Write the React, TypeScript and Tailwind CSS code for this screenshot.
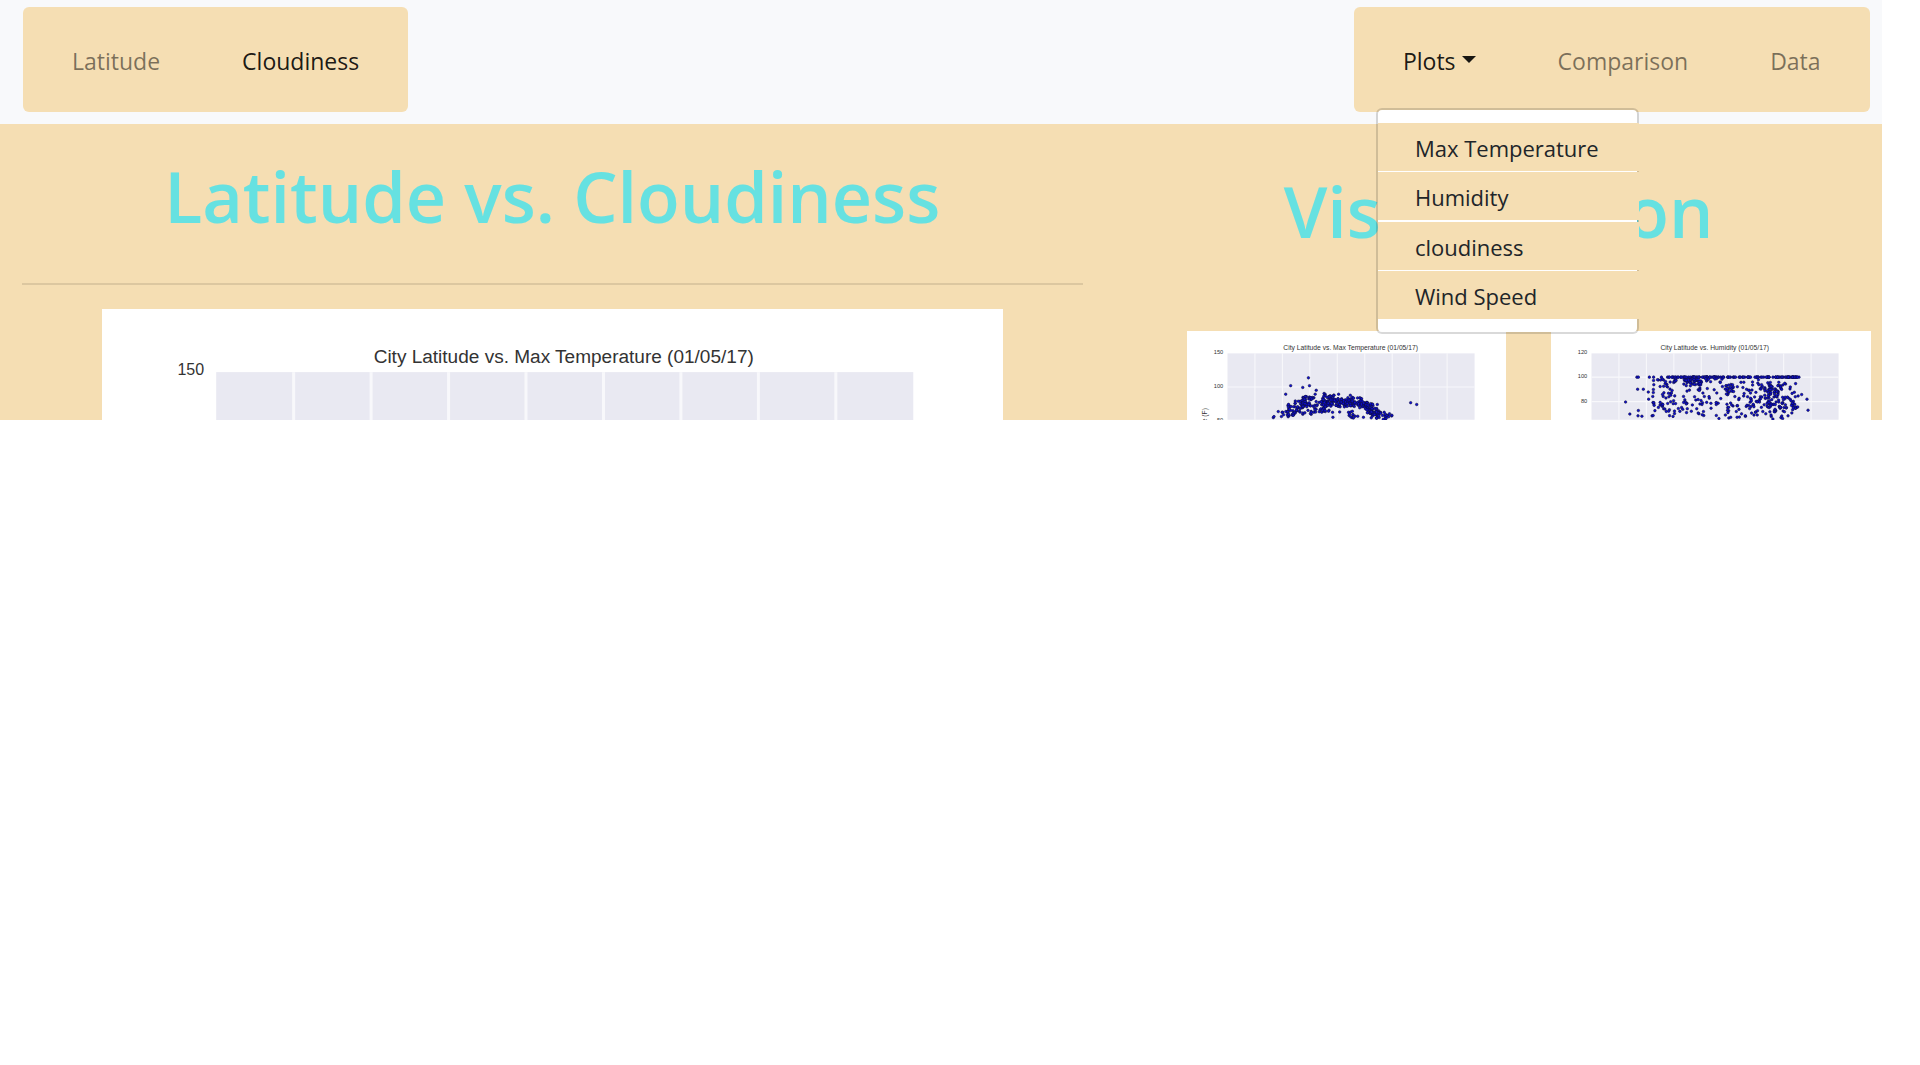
import type { ReactNode } from "react";

type Point = [number, number];
type Cluster = { x: [number, number]; y: [number, number]; n: number };

const SIDE = 114;
const RIGHT = 810;
const TOP = 63;

function seeded(seed: number) {
  let s = seed;
  return () => {
    s = (s * 16807) % 2147483647;
    return s / 2147483647;
  };
}

function scatter(clusters: Cluster[], seed: number): Point[] {
  const rnd = seeded(seed);
  return clusters.flatMap((c) =>
    Array.from({ length: c.n }, (): Point => [
      c.x[0] + rnd() * (c.x[1] - c.x[0]),
      c.y[0] + rnd() * (c.y[1] - c.y[0]),
    ]),
  );
}

const temperaturePoints: Point[] = [
  [342, 132], [292, 154], [326, 159], [345, 154], [364, 167], [278, 178],
  [257, 227], [243, 244], [245, 241], [266, 241], [411, 243], [630, 202],
  [647, 207], [361, 178], [386, 176], [389, 178], [427, 178], [460, 181],
  [402, 183], [536, 207], [410, 229], [430, 228], [455, 229], [465, 244],
  [481, 240], [497, 243],
  ...scatter(
    [
      { x: [268, 288], y: [220, 242], n: 10 },
      { x: [282, 306], y: [204, 238], n: 24 },
      { x: [304, 328], y: [196, 236], n: 24 },
      { x: [324, 350], y: [184, 212], n: 38 },
      { x: [326, 350], y: [210, 236], n: 8 },
      { x: [348, 386], y: [186, 230], n: 30 },
      { x: [378, 414], y: [180, 212], n: 42 },
      { x: [380, 400], y: [212, 230], n: 10 },
      { x: [404, 450], y: [190, 214], n: 52 },
      { x: [446, 492], y: [186, 214], n: 50 },
      { x: [486, 510], y: [196, 220], n: 26 },
      { x: [504, 526], y: [204, 232], n: 28 },
      { x: [518, 540], y: [216, 246], n: 28 },
      { x: [532, 562], y: [228, 250], n: 20 },
      { x: [452, 476], y: [226, 246], n: 9 },
      { x: [556, 578], y: [232, 250], n: 7 },
    ],
    41,
  ),
];

const humidityPoints: Point[] = [
  [242, 130], [246, 130], [277, 130], [311, 130], [244, 164], [260, 164],
  [210, 200], [222, 234], [246, 224], [245, 239], [256, 240], [274, 172],
  [275, 192], [706, 179], [721, 192], [724, 223], [696, 183], [289, 130],
  ...scatter(
    [
      { x: [328, 702], y: [130, 130], n: 150 },
      { x: [284, 318], y: [134, 248], n: 30 },
      { x: [318, 350], y: [134, 248], n: 30 },
      { x: [344, 450], y: [134, 144], n: 24 },
      { x: [374, 424], y: [136, 156], n: 34 },
      { x: [370, 430], y: [160, 206], n: 17 },
      { x: [430, 510], y: [134, 206], n: 24 },
      { x: [350, 500], y: [200, 248], n: 26 },
      { x: [490, 590], y: [134, 180], n: 30 },
      { x: [490, 590], y: [180, 248], n: 50 },
      { x: [580, 690], y: [140, 248], n: 64 },
      { x: [600, 655], y: [152, 166], n: 18 },
      { x: [602, 640], y: [168, 190], n: 28 },
      { x: [606, 646], y: [196, 228], n: 24 },
      { x: [640, 696], y: [202, 218], n: 16 },
    ],
    97,
  ),
];

type ChartProps = {
  title: string;
  height: number;
  ticks: { label: string; y: number }[];
  points?: Point[];
  children?: ReactNode;
};

function Chart({ title, height, ticks, points = [], children }: ChartProps) {
  const step = (RIGHT - SIDE) / 9;
  return (
    <svg
      viewBox={`0 0 900 ${height}`}
      role="img"
      aria-label={title}
      className="block w-full bg-white font-['Liberation_Sans',Arial,sans-serif]"
    >
      <rect x={SIDE} y={TOP} width={RIGHT - SIDE} height={height - TOP} fill="#e9e9f2" />
      {Array.from({ length: 8 }, (_, i) => (
        <line
          key={i}
          x1={SIDE + step * (i + 1)}
          x2={SIDE + step * (i + 1)}
          y1={TOP}
          y2={height}
          stroke="#f8f8fb"
          strokeWidth="3"
        />
      ))}
      {ticks.map((t) => (
        <g key={t.label}>
          {t.y > TOP && (
            <line x1={SIDE} x2={RIGHT} y1={t.y} y2={t.y} stroke="#f8f8fb" strokeWidth="3" />
          )}
          <text x="102" y={t.y + 3} textAnchor="end" fontSize="16" fill="#333333">
            {t.label}
          </text>
        </g>
      ))}
      {points.map(([x, y], i) => (
        <circle key={i} cx={x} cy={y} r="3.6" fill="#0c0cd8" stroke="#10102c" strokeWidth="1.5" />
      ))}
      <text x="461" y="54" textAnchor="middle" fontSize="19" fill="#333333">
        {title}
      </text>
      {children}
    </svg>
  );
}

const plots = ["Max Temperature", "Humidity", "cloudiness", "Wind Speed"];

export default function App() {
  return (
    <div className="min-h-screen bg-white font-['Open_Sans','Segoe_UI',sans-serif]">
      <div className="w-[98%]">
        <nav className="flex items-start justify-between bg-[#f8f9fb] pt-[7px] pr-3 pb-3 pl-[23px] text-[23px] leading-9">
          <ul className="flex gap-[82px] rounded-md bg-[#f5deb3] px-[49px] pt-9 pb-[33px]">
            <li>
              <a href="#latitude" className="text-black/50">Latitude</a>
            </li>
            <li>
              <a href="#cloudiness" className="text-black/90">Cloudiness</a>
            </li>
          </ul>
          <ul className="flex gap-[82px] rounded-md bg-[#f5deb3] px-[49px] pt-9 pb-[33px]">
            <li className="relative">
              <button type="button" aria-expanded="true" className="flex items-center gap-1.5 text-black/90">
                Plots
                <span className="mb-1 border-x-[7px] border-t-[7px] border-x-transparent border-t-current" />
              </button>
              <div className="absolute top-[65px] -left-[27px] z-10 flex w-[263px] flex-col gap-px rounded-md border-2 border-black/15 bg-white bg-clip-padding py-[13px] text-[22px]">
                {plots.map((p) => (
                  <a
                    key={p}
                    href="#plot"
                    className="-mr-0.5 bg-[#f5deb3] pt-0.5 pl-[37px] leading-[46px] whitespace-nowrap text-[#212529] nth-3:mt-px"
                  >
                    {p}
                  </a>
                ))}
              </div>
            </li>
            <li>
              <a href="#comparison" className="text-black/50">Comparison</a>
            </li>
            <li>
              <a href="#data" className="text-black/50">Data</a>
            </li>
          </ul>
        </nav>
        <main className="flex bg-[#f5deb3] text-center">
          <section className="flex-[1106] basis-0 px-[22px] pt-[27px]">
            <h1 className="text-[70px] leading-[90px] font-semibold text-[#66e1e1]">
              Latitude vs. Cloudiness
            </h1>
            <hr className="mt-[42px] mb-6 border-0 border-t-2 border-black/10" />
            <div className="mx-auto w-[85%]">
              <Chart
                title="City Latitude vs. Max Temperature (01/05/17)"
                height={111}
                ticks={[{ label: "150", y: TOP }]}
              />
            </div>
          </section>
          <section className="flex-[776] basis-0 pt-[42px] pr-[11px] pl-[22px]">
            <h1 className="text-[70px] leading-[90px] font-semibold text-[#66e1e1]">
              Visualization
            </h1>
            <div className="mt-[75px] ml-[60px] grid grid-cols-2 gap-[45px]">
              <Chart
                title="City Latitude vs. Max Temperature (01/05/17)"
                height={250}
                points={temperaturePoints}
                ticks={[
                  { label: "150", y: TOP },
                  { label: "100", y: 158 },
                  { label: "50", y: 253 },
                ]}
              >
                <text transform="translate(57 217) rotate(-90)" textAnchor="end" fontSize="19" fill="#333333">
                  Max Temperature (F)
                </text>
              </Chart>
              <Chart
                title="City Latitude vs. Humidity (01/05/17)"
                height={250}
                points={humidityPoints}
                ticks={[
                  { label: "120", y: TOP },
                  { label: "100", y: 130 },
                  { label: "80", y: 199 },
                ]}
              />
            </div>
          </section>
        </main>
      </div>
    </div>
  );
}
